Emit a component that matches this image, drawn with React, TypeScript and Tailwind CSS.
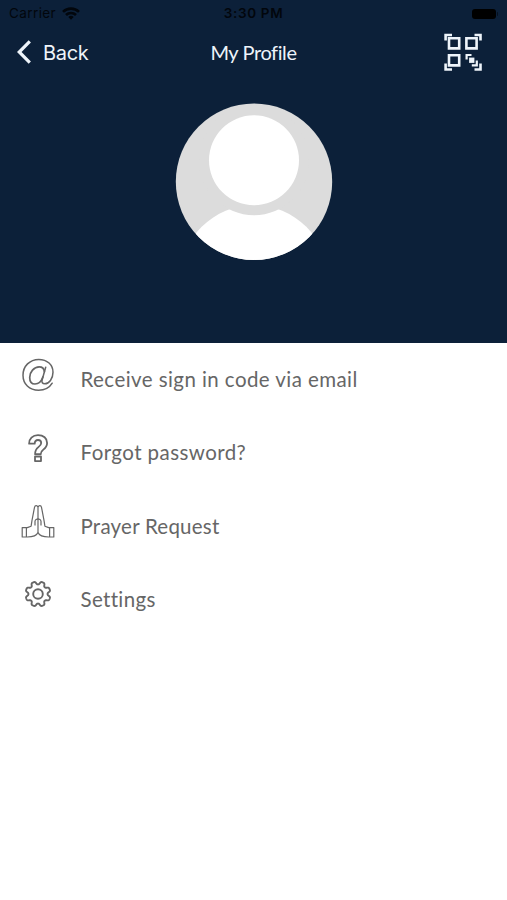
import { memo } from "react"

interface IconProps {
  className?: string
}

const WifiIcon = ({ className = '' }: IconProps) => (
  <svg className={className} viewBox="0 0 18 13" fill="none" stroke="currentColor" strokeWidth="2.6">
    <path d="M1 4.9A11.4 11.4 0 0 1 17 4.9" />
    <path d="M4 8A7.1 7.1 0 0 1 14 8" />
    <path d="M9 12.8L6.3 10.1A3.8 3.8 0 0 1 11.7 10.1Z" fill="currentColor" stroke="none" />
  </svg>
)

const ScanIcon = ({ className = '' }: IconProps) => (
  <svg className={className} viewBox="0 0 38 38" fill="none" stroke="currentColor" strokeWidth="2.6">
    <path d="M1.6 7.5V2H8M30.5 2H36.5V7.5M1.6 30.5V36.5H8M30.5 36.5H36.5V30.5" />
    <path d="M5 5.2H15.2V15.4H5ZM22.4 5.2H32.6V15.4H22.4ZM5 22.2H15.2V32.4H5Z" />
    <path d="M22.6 26.5V22H27.5M32.8 27.5V32.4H27.8" strokeWidth="2.2" />
    <path d="M25.1 24.6H30.4V29.9H25.1Z" fill="currentColor" stroke="none" />
  </svg>
)

const Avatar = ({ className = '' }: IconProps) => (
  <svg className={className} viewBox="0 0 158 158">
    <clipPath id="avatar">
      <circle cx="79" cy="78.7" r="78.2" />
    </clipPath>
    <g clipPath="url(#avatar)">
      <rect width="158" height="158" fill="#dcdcdc" />
      <circle cx="79" cy="176.2" r="74" fill="#fff" />
      <circle cx="79" cy="57.2" r="55" fill="#dcdcdc" />
      <circle cx="79" cy="57.2" r="45" fill="#fff" />
    </g>
  </svg>
)

const AtIcon = ({ className = '' }: IconProps) => (
  <svg className={className} viewBox="0 0 34 34" fill="none" stroke="currentColor" strokeLinecap="round">
    <path d="M31.2 25.2C28.4 29.8 23.4 32.3 17.6 32.3C8.3 32.3 2 26 2 17.2C2 8.1 8.8 1.4 17.8 1.4C26.2 1.4 32 6.8 32 14.3C32 20.8 28 25.8 23.8 25.8C21.4 25.8 20.5 24.3 21.1 22L24.7 9.2" strokeWidth="1.5" />
    <path d="M23.4 13.6C23 10.6 21 8.9 18.2 8.9C13 8.9 8.7 14.1 8.7 19.4C8.7 23.4 10.8 26 14 26C17.5 26 20.4 23.2 21.9 19" strokeWidth="1.7" />
  </svg>
)

const QuestionIcon = ({ className = '' }: IconProps) => (
  <svg className={className} viewBox="0 0 34 34" fill="none" stroke="currentColor" strokeWidth="1.8" strokeLinejoin="round">
    <path d="M8.1 12.7C7.9 7.7 11.6 4.1 17 4.1C22.5 4.1 26.1 7.3 26.1 11.9C26.1 15.4 24.1 17.3 22 18.9C20.2 20.2 19.7 21.1 19.7 23.2H14.1C14 19.6 15 18 17.4 16.1C19.3 14.6 20.2 13.5 20.2 11.9C20.2 10.1 19 9 17 9C15 9 13.8 10.3 13.7 12.7Z" />
    <path d="M14 25.5H20V30.1H14Z" />
  </svg>
)

const PrayerIcon = ({ className = '' }: IconProps) => (
  <svg className={className} viewBox="0 0 34 34" fill="none" stroke="currentColor" strokeWidth="1.2" strokeLinejoin="round">
    <path d="M17 3.2C16.2 1 14 1.1 13.5 3.3L11 16.4L10.1 22.2L6.3 23.6H1.2V33H6.3C10.8 33 15.2 32.8 17 28.5V15.4" />
    <path d="M17 3.2C17.8 1 20 1.1 20.5 3.3L23 16.4L23.9 22.2L27.7 23.6H32.8V33H27.7C23.2 33 18.8 32.8 17 28.5" />
    <path d="M17 3.2V15.4M5.4 23.6V33M28.6 23.6V33M14 21.5V17.3C14.2 15.6 15.6 14.8 17 15.4C18.4 14.8 19.8 15.6 20 17.3V21.5" />
  </svg>
)

// outline of a cog with eight rounded teeth, gap at the top
const cogPoints = Array.from({ length: 180 }, (_, i) => {
  const a = (i * Math.PI) / 90
  const r = 11 + 1.6 * Math.tanh(1.8 * (0.2 - Math.cos(8 * a)))
  return `${(17 + r * Math.cos(a)).toFixed(2)},${(17 + r * Math.sin(a)).toFixed(2)}`
}).join(' ')

const SettingsIcon = ({ className = '' }: IconProps) => (
  <svg className={className} viewBox="0 0 34 34" fill="none" stroke="currentColor" strokeWidth="1.9" strokeLinejoin="round">
    <polygon points={cogPoints} />
    <circle cx="17" cy="17" r="4.8" />
  </svg>
)

interface MenuRowProps {
  Icon: React.ComponentType<IconProps>
  label: string
  className?: string
}

const MenuRow = memo(({ Icon, label, className = '' }: MenuRowProps) => {
  return (
    <div className="flex h-[73.3px] items-start pl-[20.5px]">
      <Icon className="mt-[14.5px] h-[34px] w-[34px] shrink-0 text-[#666]" />
      <span className={`ml-[26px] mt-[21px] whitespace-nowrap text-[20.5px] leading-[30px] text-[#666] ${className}`}>{label}</span>
    </div>
  )
})

export default function App() {
  return (
    <div className="flex h-[900px] w-full flex-col bg-white font-['Lato',sans-serif]">
      <header className="flex h-[343px] shrink-0 flex-col bg-[#0c2039]">
        <div className="grid h-[27px] grid-cols-3 items-center font-['Inter',sans-serif] text-[13.5px] text-[#02060c]">
          <div className="flex items-center gap-[6px] pl-[9px]">
            <span className="tracking-[0.4px]">Carrier</span>
            <WifiIcon className="h-[13px] w-[18px]" />
          </div>
          <span className="text-center font-semibold tracking-[0.65px]">3:30 PM</span>
          <div className="flex items-center justify-end pr-[9px]">
            <div className="h-[10px] w-[24px] rounded-[3px] bg-black" />
            <div className="ml-px h-[4px] w-px rounded-r bg-[#06101e]" />
          </div>
        </div>
        <div className="grid h-[50px] grid-cols-3 items-center text-[#eef4fa]">
          <div className="flex items-center gap-[12px] pl-[17px]">
            <svg className="h-[24px] w-[14px]" viewBox="0 0 14 24" fill="none" stroke="currentColor" strokeWidth="3.2">
              <path d="M12.8 1.3L2.2 12L12.8 22.7" />
            </svg>
            <span className="pt-[2px] font-['Inter',sans-serif] text-[20px] tracking-[-0.3px]">Back</span>
          </div>
          <span className="text-center text-[20px] tracking-[-0.4px]">My Profile</span>
          <div className="flex justify-end pr-[25px]">
            <ScanIcon className="h-[38px] w-[38px]" />
          </div>
        </div>
        <Avatar className="mt-[26px] ml-[175px] h-[158px] w-[158px]" />
      </header>
      <main className="flex flex-col">
        <MenuRow Icon={AtIcon} label="Receive sign in code via email" className="tracking-[0.43px]" />
        <MenuRow Icon={QuestionIcon} label="Forgot password?" className="tracking-[0.43px]" />
        <MenuRow Icon={PrayerIcon} label="Prayer Request" className="tracking-[0.24px]" />
        <MenuRow Icon={SettingsIcon} label="Settings" className="tracking-[0.34px]" />
      </main>
    </div>
  )
}
